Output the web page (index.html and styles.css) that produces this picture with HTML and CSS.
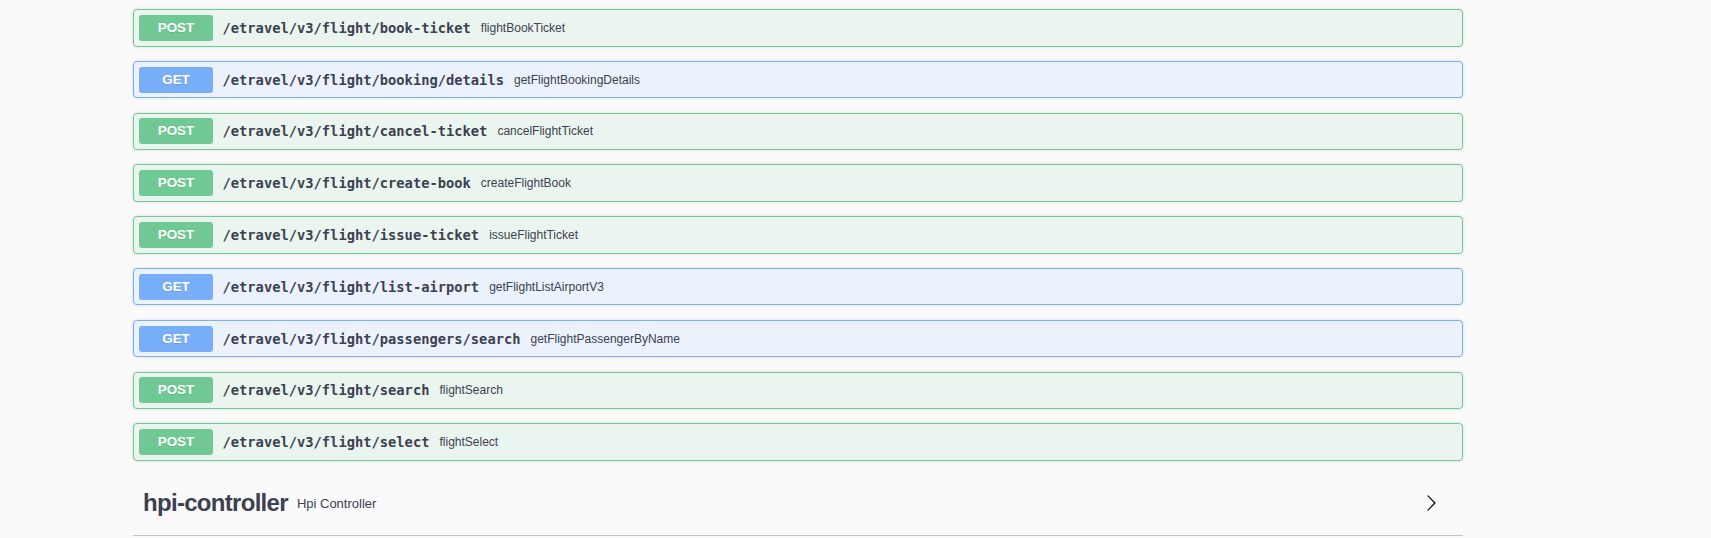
FILE: index.html
```html
<!DOCTYPE html>
<html>
<head>
<meta charset="utf-8">
<link rel="stylesheet" href="styles.css">
</head>
<body>
<div class="wrapper">
  <div class="op op-post"><span class="method">POST</span><span class="path">/etravel/v3/flight/book-ticket</span><span class="desc">flightBookTicket</span></div>
  <div class="op op-get"><span class="method">GET</span><span class="path">/etravel/v3/flight/booking/details</span><span class="desc">getFlightBookingDetails</span></div>
  <div class="op op-post"><span class="method">POST</span><span class="path">/etravel/v3/flight/cancel-ticket</span><span class="desc">cancelFlightTicket</span></div>
  <div class="op op-post"><span class="method">POST</span><span class="path">/etravel/v3/flight/create-book</span><span class="desc">createFlightBook</span></div>
  <div class="op op-post"><span class="method">POST</span><span class="path">/etravel/v3/flight/issue-ticket</span><span class="desc">issueFlightTicket</span></div>
  <div class="op op-get"><span class="method">GET</span><span class="path">/etravel/v3/flight/list-airport</span><span class="desc">getFlightListAirportV3</span></div>
  <div class="op op-get"><span class="method">GET</span><span class="path">/etravel/v3/flight/passengers/search</span><span class="desc">getFlightPassengerByName</span></div>
  <div class="op op-post"><span class="method">POST</span><span class="path">/etravel/v3/flight/search</span><span class="desc">flightSearch</span></div>
  <div class="op op-post"><span class="method">POST</span><span class="path">/etravel/v3/flight/select</span><span class="desc">flightSelect</span></div>
  <div class="tag">
    <span class="tag-name">hpi-controller</span>
    <span class="tag-desc">Hpi Controller</span>
    <svg class="chev" width="18" height="18" viewBox="0 0 20 20"><path d="M13.25 10L6.109 2.58a.697.697 0 0 1 0-.979.68.68 0 0 1 .969 0l7.83 7.908a.697.697 0 0 1 0 .979l-7.83 7.908a.68.68 0 0 1-.969 0 .697.697 0 0 1 0-.979L13.25 10z" fill="#111"/></svg>
  </div>
</div>
</body>
</html>
```

FILE: styles.css
```css
html, body {
  margin: 0;
  padding: 0;
  background: #fafafa;
}
.wrapper {
  width: 1330px;
  margin-left: 133px;
  padding-top: 9px;
  font-family: "Liberation Sans", Arial, sans-serif;
  color: #3b4151;
}
.op {
  display: flex;
  align-items: center;
  height: 37.5px;
  box-sizing: border-box;
  padding: 0 5px;
  margin-bottom: 14.3px;
  border: 1px solid;
  border-radius: 4px;
  box-shadow: 0 0 3px rgba(0,0,0,.15);
}
.op-post {
  background: #ebf5ef;
  border-color: #71ca96;
}
.op-get {
  background: #ebf2fb;
  border-color: #7aaff6;
}
.method {
  width: 74px;
  height: 26px;
  line-height: 26px;
  border-radius: 3px;
  text-align: center;
  color: #fff;
  font-weight: bold;
  font-size: 13.4px;
  text-shadow: 0 1px 0 rgba(0,0,0,.1);
  flex: none;
}
.op-post .method { background: #70c994; }
.op-get .method { background: #78adf7; }
.path {
  margin-left: 9.5px;
  font-family: "DejaVu Sans Mono", monospace;
  font-weight: bold;
  font-size: 13.75px;
  color: #3b4151;
}
.desc {
  margin-left: 10px;
  font-size: 12px;
  color: #3b4151;
}
.tag {
  display: flex;
  align-items: center;
  height: 60px;
  padding: 0 23px 2px 10px;
  border-bottom: 1px solid #c4c5ca;
  box-sizing: content-box;
  margin-top: -2px;
}
.tag-name {
  font-size: 24px;
  line-height: 1;
  font-weight: bold;
  letter-spacing: -0.7px;
  color: #3b4151;
}
.tag-desc {
  margin-left: 9px;
  font-size: 13px;
  line-height: 1;
  color: #3b4151;
}
.chev {
  margin-left: auto;
  display: block;
}
```
